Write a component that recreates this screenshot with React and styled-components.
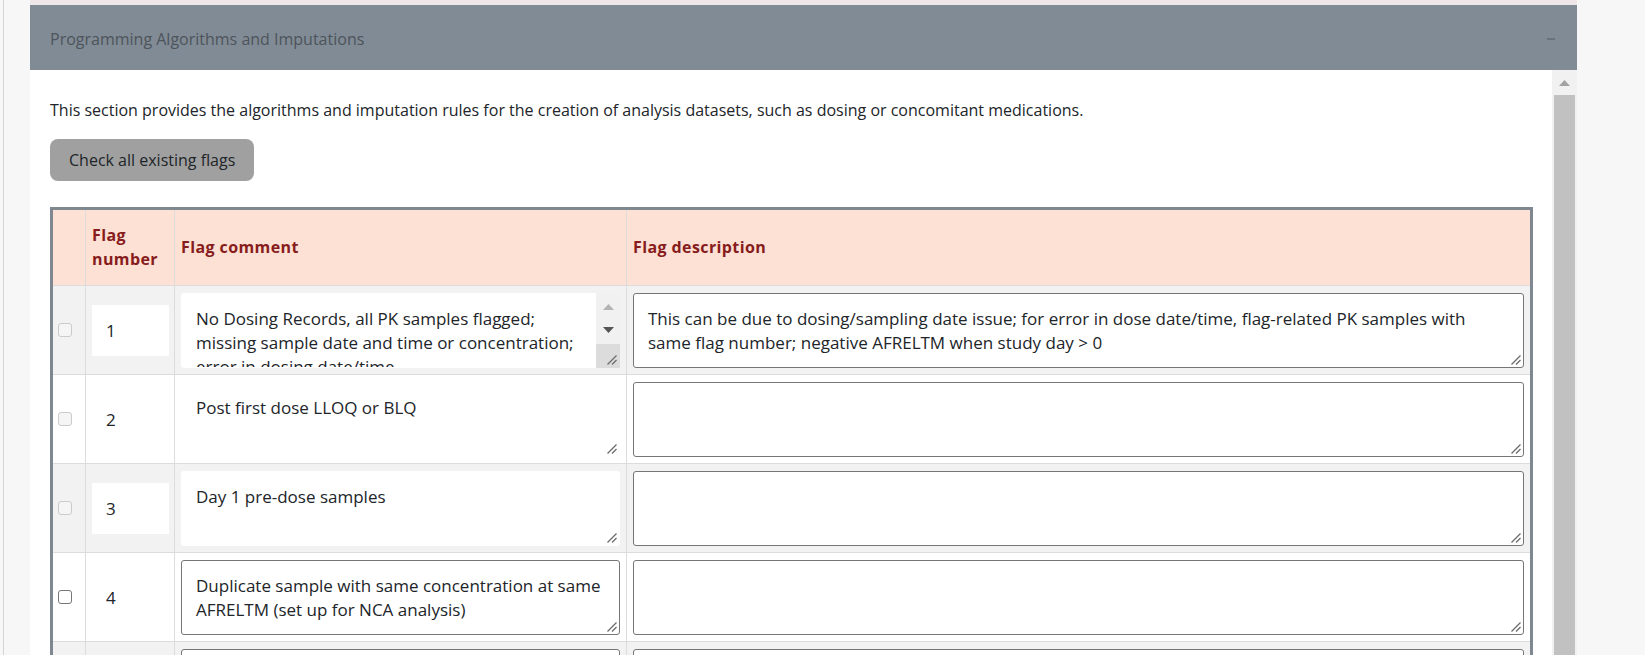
import React from "react";
import styled, { createGlobalStyle } from "styled-components";

const GlobalStyle = createGlobalStyle`
    html, body {
        margin: 0;
        padding: 0;
    }

    body {
        background-color: #f7f7f7;
        font-family: "Open Sans", "Noto Sans", sans-serif;
        color: #212529;
        overflow: hidden;
    }

    * {
        box-sizing: border-box;
    }
`

const flags = [
    {
        id: 1,
        comment: "No Dosing Records, all PK samples flagged;\nmissing sample date and time or concentration;\nerror in dosing date/time",
        description: "This can be due to dosing/sampling date issue; for error in dose date/time, flag-related PK samples with same flag number; negative AFRELTM when study day > 0",
        locked: true,
        overflow: true,
    },
    { id: 2, comment: "Post first dose LLOQ or BLQ", description: "", locked: true },
    { id: 3, comment: "Day 1 pre-dose samples", description: "", locked: true },
    { id: 4, comment: "Duplicate sample with same concentration at same AFRELTM (set up for NCA analysis)", description: "", locked: false },
    { id: 5, comment: "", description: "", locked: false },
]

function Grip() {
    return (
        <GripMark width="10" height="10" viewBox="0 0 10 10">
            <line x1="9.5" y1="0.5" x2="0.5" y2="9.5" stroke="#6a6a6a" strokeWidth="1.2" />
            <line x1="9.5" y1="5" x2="5" y2="9.5" stroke="#6a6a6a" strokeWidth="1.2" />
        </GripMark>
    )
}

function FlagText({ value, boxed, overflow }) {
    return (
        <FieldWrap>
            <TextBox readOnly value={value} $boxed={boxed} $overflow={overflow} />
            {overflow ? (
                <MiniScroll>
                    <svg width="11" height="6" viewBox="0 0 11 6"><path d="M5.5 0 L11 6 L0 6 Z" fill="#b4b4b4" /></svg>
                    <svg width="11" height="6" viewBox="0 0 11 6"><path d="M0 0 L11 0 L5.5 6 Z" fill="#555" /></svg>
                    <Corner><Grip /></Corner>
                </MiniScroll>
            ) : (
                <Grip />
            )}
        </FieldWrap>
    )
}

function App() {
    return (
        <>
            <GlobalStyle />
            <Page>
                <Rail>
                    <Panel>
                        <PanelHeader>
                            <Title>Programming Algorithms and Imputations</Title>
                            <Collapse />
                        </PanelHeader>

                        <PanelBody>
                            <Content>
                                <Intro>
                                    This section provides the algorithms and imputation rules for the creation of analysis datasets, such as dosing or concomitant medications.
                                </Intro>
                                <CheckButton>Check all existing flags</CheckButton>

                                <FlagTable>
                                    <HeadRow>
                                        <HeadCell />
                                        <HeadCell>Flag number</HeadCell>
                                        <HeadCell>Flag comment</HeadCell>
                                        <HeadCell $last>Flag description</HeadCell>
                                    </HeadRow>

                                    {flags.map((row, i) => (
                                        <Row key={row.id} $striped={i % 2 === 0}>
                                            <CheckCell>
                                                <Check disabled={row.locked} />
                                            </CheckCell>
                                            <NumberCell>
                                                <NumberInput readOnly value={row.id} />
                                            </NumberCell>
                                            <Cell>
                                                <FlagText value={row.comment} boxed={!row.locked} overflow={row.overflow} />
                                            </Cell>
                                            <Cell $last>
                                                <FlagText value={row.description} boxed />
                                            </Cell>
                                        </Row>
                                    ))}
                                </FlagTable>
                            </Content>

                            <ScrollTrack>
                                <ScrollArrow>
                                    <svg width="11" height="6" viewBox="0 0 11 6"><path d="M5.5 0 L11 6 L0 6 Z" fill="#a3a3a3" /></svg>
                                </ScrollArrow>
                                <ScrollThumb />
                            </ScrollTrack>
                        </PanelBody>
                    </Panel>
                </Rail>
            </Page>
        </>
    )
}

export default App

const Page = styled.div`
    display: flex;
    height: 655px;
    padding-left: 3px;
    overflow: hidden;
`

const Rail = styled.div`
    display: flex;
    flex: 1;
    border-left: 1px solid #d4d4d4;
    padding-left: 26px;
`

const Panel = styled.section`
    width: 1547px;
    display: flex;
    flex-direction: column;
    border-top: 5px solid #efe6e8;
`

const PanelHeader = styled.div`
    height: 65px;
    flex-shrink: 0;
    display: flex;
    align-items: center;
    justify-content: space-between;
    padding: 2px 22px 0 20px;
    background-color: #818b95;
`

const Title = styled.h3`
    margin: 0;
    font-size: 16px;
    font-weight: 400;
    color: #4d545b;
`

const Collapse = styled.span`
    width: 8px;
    height: 2px;
    background-color: #6a737c;
`

const PanelBody = styled.div`
    flex: 1;
    min-height: 0;
    display: flex;
    background-color: #fff;
`

const Content = styled.div`
    flex: 1;
    padding: 28px 19px 0 20px;
    overflow: hidden;
`

const Intro = styled.p`
    margin: 0;
    font-size: 16px;
    line-height: 24px;
`

const CheckButton = styled.button`
    display: block;
    margin-top: 17px;
    height: 42px;
    padding: 0 19px;
    border: none;
    border-radius: 8px;
    background-color: #a0a0a0;
    color: #212529;
    font-family: inherit;
    font-size: 16px;
`

const FlagTable = styled.div`
    margin-top: 26px;
    border: 3px solid #7f8891;
    border-bottom: none;
`

const HeadRow = styled.div`
    display: grid;
    grid-template-columns: 33px 89px 452px 1fr;
    background-color: #fde1d4;
    border-bottom: 1px solid #dcdcdc;
`

const HeadCell = styled.div`
    display: flex;
    align-items: center;
    padding: 12px 6px 13px;
    min-height: 75px;
    font-size: 16px;
    line-height: 24px;
    font-weight: 700;
    letter-spacing: 0.4px;
    color: #861c1c;
    border-right: ${p => p.$last ? 'none' : '1px solid #dcdcdc'};
`

const Row = styled.div`
    display: grid;
    grid-template-columns: 33px 89px 452px 1fr;
    background-color: ${p => p.$striped ? '#f2f2f2' : '#fff'};
    border-bottom: 1px solid #dcdcdc;
`

const Cell = styled.div`
    padding: 7px 6px 6px;
    border-right: ${p => p.$last ? 'none' : '1px solid #dcdcdc'};
`

const CheckCell = styled(Cell)`
    display: flex;
    align-items: center;
    padding: 0 0 0 5px;
`

const NumberCell = styled(Cell)`
    display: flex;
    align-items: center;
    padding: 0 6px;
`

const Check = styled.input.attrs({ type: 'checkbox' })`
    appearance: none;
    margin: 0;
    width: 14px;
    height: 14px;
    border-radius: 3px;
    border: 1px solid ${p => p.disabled ? '#cbcbcb' : '#767676'};
    background-color: ${p => p.disabled ? '#f5f5f5' : '#fff'};
`

const NumberInput = styled.input`
    width: 77px;
    height: 51px;
    padding: 0 14px;
    border: none;
    outline: none;
    background-color: #fff;
    font-family: inherit;
    font-size: 17px;
    color: #212529;
`

const FieldWrap = styled.div`
    position: relative;
    height: 75px;
`

const TextBox = styled.textarea`
    display: block;
    width: 100%;
    height: 100%;
    padding: 13px ${p => p.$overflow ? '26px' : '14px'} 0 14px;
    border: 1px solid ${p => p.$boxed ? '#767676' : 'transparent'};
    border-radius: 3px;
    background-color: #fff;
    font-family: inherit;
    font-size: 17px;
    line-height: 24px;
    color: #212529;
    resize: none;
    overflow: hidden;
    outline: none;
`

const GripMark = styled.svg`
    position: absolute;
    right: 3px;
    bottom: 3px;
`

const MiniScroll = styled.div`
    position: absolute;
    top: 0;
    right: 0;
    bottom: 0;
    width: 24px;
    display: flex;
    flex-direction: column;
    align-items: center;
    padding-top: 11px;
    gap: 17px;
    background-color: #f1f1f1;
`

const Corner = styled.div`
    position: absolute;
    right: 0;
    bottom: 0;
    width: 24px;
    height: 24px;
    background-color: #dcdcdc;
`

const ScrollTrack = styled.div`
    width: 25px;
    flex-shrink: 0;
    display: flex;
    flex-direction: column;
    padding: 0 2px;
    background-color: #f1f1f1;
`

const ScrollArrow = styled.div`
    height: 25px;
    display: flex;
    align-items: center;
    justify-content: center;
`

const ScrollThumb = styled.div`
    flex: 1;
    background-color: #c1c1c1;
`
